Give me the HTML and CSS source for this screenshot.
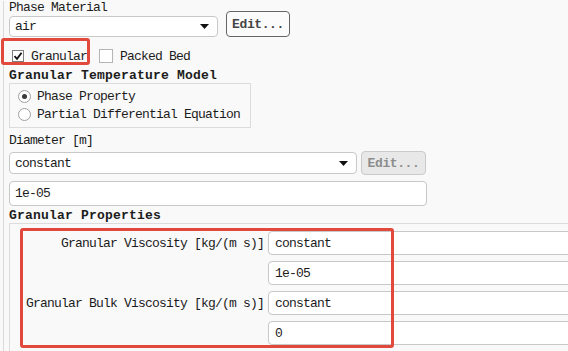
FILE: index.html
```html
<!DOCTYPE html>
<html>
<head>
  <title>Phase Setup</title>
  <link rel="stylesheet" href="styles.css">
</head>
<body>
  <div class="panel">
    <div class="label label-top">Phase Material</div>
    <div class="row row-top">
      <div class="select select-material">
        <span>air</span>
        <svg class="arrow" width="9" height="5" viewBox="0 0 9 5"><path d="M0 0H9L4.5 5Z"/></svg>
      </div>
      <button class="btn">Edit...</button>
    </div>

    <div class="checks">
      <label class="check marked">
        <span class="box">
          <svg width="10" height="10" viewBox="0 0 10 10"><path d="M1.5 5.2L4 7.8L8.6 1.8" fill="none" stroke="#111" stroke-width="1.8"/></svg>
        </span>
        Granular
      </label>
      <label class="check">
        <span class="box box-off"></span>
        Packed Bed
      </label>
    </div>

    <div class="heading">Granular Temperature Model</div>
    <div class="group radios">
      <div class="radio-row"><span class="radio on"></span>Phase Property</div>
      <div class="radio-row"><span class="radio"></span>Partial Differential Equation</div>
    </div>

    <div class="label label-diam">Diameter [m]</div>
    <div class="row row-diam">
      <div class="select select-diam">
        <span>constant</span>
        <svg class="arrow" width="9" height="5" viewBox="0 0 9 5"><path d="M0 0H9L4.5 5Z"/></svg>
      </div>
      <button class="btn btn-off">Edit...</button>
    </div>
    <div class="input input-diam">1e-05</div>

    <div class="heading heading-props">Granular Properties</div>
    <div class="group props">
      <div class="prop-grid">
        <div class="prop-label">Granular Viscosity [kg/(m s)]</div>
        <div class="input prop-input">constant</div>
        <div></div>
        <div class="input prop-input">1e-05</div>
        <div class="prop-label">Granular Bulk Viscosity [kg/(m s)]</div>
        <div class="input prop-input">constant</div>
        <div></div>
        <div class="input prop-input">0</div>
      </div>
      <div class="mark-box"></div>
    </div>
  </div>
</body>
</html>
```

FILE: styles.css
```css
html, body {
  margin: 0;
  background: #f9f9f9;
  overflow: hidden;
}
body {
  width: 568px;
  height: 351px;
  font-family: "Liberation Mono", monospace;
  font-size: 13px;
  letter-spacing: -0.8px;
  color: #1c1c1c;
}
.panel {
  margin-left: 3px;
  border-left: 1px solid #dadada;
  padding-left: 5px;
  height: 351px;
}
.label {
  height: 10px;
  line-height: 10px;
  white-space: nowrap;
}
.label-top {
  margin-top: 1px;
  line-height: 14px;
}
.row {
  display: flex;
  gap: 8px;
}
.row-top {
  align-items: flex-end;
  height: 26px;
}
.select, .input {
  box-sizing: border-box;
  background: #fff;
  border: 1px solid #c8c8c8;
  border-radius: 4px;
  display: flex;
  align-items: center;
  padding-left: 5px;
  white-space: nowrap;
}
.select {
  justify-content: space-between;
  padding-right: 8px;
}
.arrow { fill: #111; }
.select-material {
  width: 209px;
  height: 21px;
}
.btn {
  box-sizing: border-box;
  height: 26px;
  width: 64px;
  padding: 0;
  background: #fbfbfb;
  border: 1px solid #666;
  border-radius: 4px;
  font-family: "Liberation Mono", monospace;
  font-size: 13px;
  font-weight: bold;
  letter-spacing: -0.4px;
  color: #444;
}

.checks {
  display: flex;
  align-items: center;
  height: 26px;
  margin-top: 6px;
  padding-left: 3px;
}
.check {
  display: flex;
  align-items: center;
  gap: 7px;
  position: relative;
  margin-right: 12px;
}
.box {
  box-sizing: border-box;
  width: 12px;
  height: 12px;
  background: #fff;
  border: 1px solid #7f7f7f;
  display: flex;
  align-items: center;
  justify-content: center;
}
.box-off {
  width: 14px;
  height: 14px;
  border-color: #b5b5b5;
}
.marked::after {
  content: "";
  position: absolute;
  left: -11px;
  top: -11px;
  width: 89px;
  height: 27px;
  box-sizing: border-box;
  border: 3px solid #e2493d;
  border-radius: 3px;
}

.heading {
  height: 14px;
  line-height: 14px;
  font-weight: bold;
  letter-spacing: 0.2px;
  white-space: nowrap;
}
.group {
  box-sizing: border-box;
  border: 1px solid #dcdcdc;
}
.radios {
  width: 242px;
  padding: 3px 0 4px 8px;
}
.radio-row {
  display: flex;
  align-items: center;
  gap: 6px;
  height: 18px;
  white-space: nowrap;
}
.radio {
  box-sizing: border-box;
  width: 13px;
  height: 13px;
  border-radius: 50%;
  border: 1px solid #a0a0a0;
  background: #fff;
  display: flex;
  align-items: center;
  justify-content: center;
}
.radio.on::after {
  content: "";
  width: 5px;
  height: 5px;
  border-radius: 50%;
  background: #3a3a3a;
}

.label-diam {
  margin-top: 8px;
}
.row-diam {
  margin-top: 5px;
  height: 24px;
  align-items: center;
  gap: 4px;
}
.select-diam {
  width: 348px;
  height: 22px;
}
.btn-off {
  height: 24px;
  width: 65px;
  background: #e8e8e8;
  border-color: #cacaca;
  color: #8c8c8c;
}
.input-diam {
  width: 418px;
  height: 25px;
  margin-top: 6px;
}

.heading-props {
  margin-top: 3px;
}
.props {
  position: relative;
  width: 700px;
  padding: 7px 0 6px 10px;
}
.prop-grid {
  display: grid;
  grid-template-columns: 244px 1fr;
  column-gap: 4px;
  row-gap: 6px;
}
.prop-label {
  align-self: center;
  text-align: right;
  white-space: nowrap;
}
.prop-input {
  height: 24px;
  padding-left: 6px;
}
.mark-box {
  position: absolute;
  left: 10px;
  top: 4px;
  width: 374px;
  height: 120px;
  box-sizing: border-box;
  border: 3px solid #e2493d;
  border-radius: 3px;
}
```
